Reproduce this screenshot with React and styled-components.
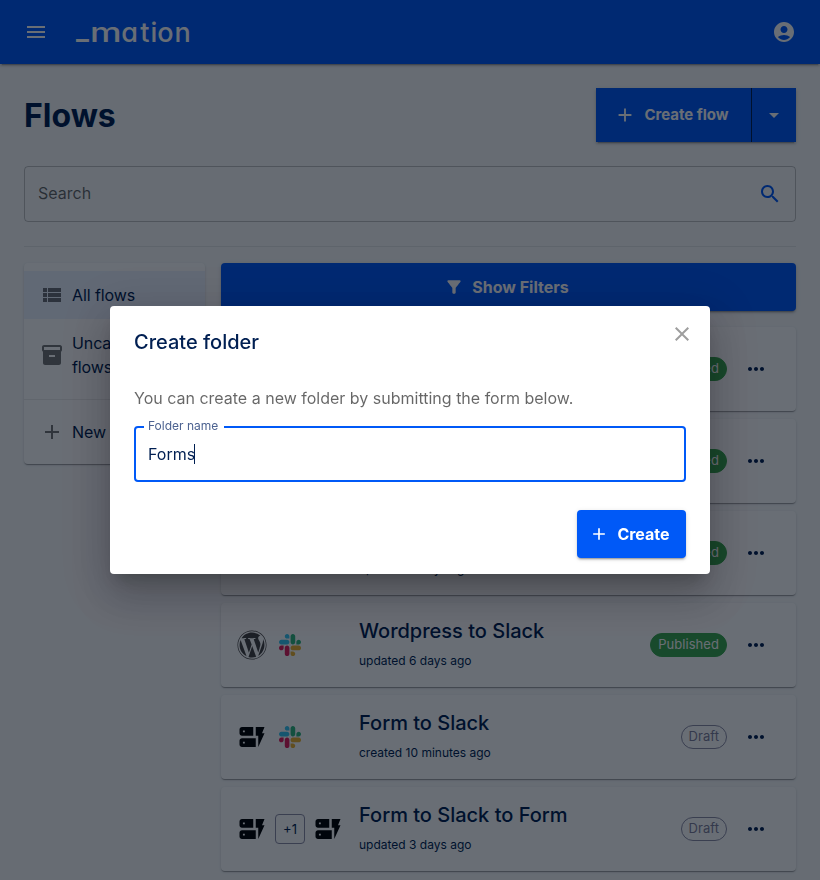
import React from "react";
import styled, { createGlobalStyle, ThemeProvider } from "styled-components";
import { FaWordpress } from "react-icons/fa";

const theme = {
  colors: {
    primary: "#0059f7",
    text: "#001f52",
    muted: "rgba(0, 0, 0, 0.54)",
    bg: "#f9fafb",
    paper: "#ffffff",
    divider: "rgba(0, 0, 0, 0.08)",
    green: "#3aa84e",
    outline: "#8d8da6",
  },
  shadow: {
    low: "0 2px 1px -1px rgba(0,0,0,.2), 0 1px 1px 0 rgba(0,0,0,.14), 0 1px 3px 0 rgba(0,0,0,.12)",
    mid: "0 3px 1px -2px rgba(0,0,0,.2), 0 2px 2px 0 rgba(0,0,0,.14), 0 1px 5px 0 rgba(0,0,0,.12)",
    high: "0 11px 15px -7px rgba(0,0,0,.2), 0 24px 38px 3px rgba(0,0,0,.14), 0 9px 46px 8px rgba(0,0,0,.12)",
  },
};

const paths = {
  menu: "M3 18h18v-2H3v2zm0-5h18v-2H3v2zm0-7v2h18V6H3z",
  account:
    "M12 2C6.48 2 2 6.48 2 12s4.48 10 10 10 10-4.48 10-10S17.52 2 12 2m0 4c1.93 0 3.5 1.57 3.5 3.5S13.93 13 12 13s-3.5-1.57-3.5-3.5S10.07 6 12 6m0 14c-2.03 0-4.43-.82-6.14-2.88C7.55 15.8 9.68 15 12 15s4.45.8 6.14 2.12C16.43 19.18 14.03 20 12 20",
  add: "M19 13h-6v6h-2v-6H5v-2h6V5h2v6h6z",
  arrow: "m7 10 5 5 5-5z",
  search:
    "M15.5 14h-.79l-.28-.27C15.41 12.59 16 11.11 16 9.5 16 5.91 13.09 3 9.5 3S3 5.91 3 9.5 5.91 16 9.5 16c1.61 0 3.09-.59 4.23-1.57l.27.28v.79l5 4.99L20.49 19zm-6 0C7.01 14 5 11.99 5 9.5S7.01 5 9.5 5 14 7.01 14 9.5 11.99 14 9.5 14",
  list: "M3 14h4v-4H3v4zm0 5h4v-4H3v4zM3 9h4V5H3v4zm5 5h13v-4H8v4zm0 5h13v-4H8v4zM8 5v4h13V5H8z",
  box: "M20 2H4c-1 0-2 .9-2 2v3.01c0 .72.43 1.34 1 1.69V20c0 1.1 1.1 2 2 2h14c.9 0 2-.9 2-2V8.7c.57-.35 1-.97 1-1.69V4c0-1-1-2-2-2m-5 12H9v-2h6zm5-7H4V4h16z",
  filter:
    "M4.25 5.61C6.27 8.2 10 13 10 13v6c0 .55.45 1 1 1h2c.55 0 1-.45 1-1v-6s3.72-4.8 5.74-7.39c.51-.66.04-1.61-.79-1.61H5.04c-.83 0-1.3.95-.79 1.61",
  more: "M6 10c-1.1 0-2 .9-2 2s.9 2 2 2 2-.9 2-2-.9-2-2-2m12 0c-1.1 0-2 .9-2 2s.9 2 2 2 2-.9 2-2-.9-2-2-2m-6 0c-1.1 0-2 .9-2 2s.9 2 2 2 2-.9 2-2-.9-2-2-2",
  close:
    "M19 6.41 17.59 5 12 10.59 6.41 5 5 6.41 10.59 12 5 17.59 6.41 19 12 13.41 17.59 19 19 17.59 13.41 12z",
  form: "M17 20v-9h-2V4h7l-2 5h2l-5 11zm-2-7v7H4c-1.1 0-2-.9-2-2v-3c0-1.1.9-2 2-2h11zm-8.75 2.75h-1.5v1.5h1.5v-1.5zM13 4v7H4c-1.1 0-2-.9-2-2V6c0-1.1.9-2 2-2h9zM6.25 6.75h-1.5v1.5h1.5v-1.5z",
};

const Icon = ({ name, size = 24 }) => (
  <svg width={size} height={size} viewBox="0 0 24 24" fill="currentColor">
    <path d={paths[name]} />
  </svg>
);

const SlackIcon = () => (
  <svg width="22" height="22" viewBox="0 0 122.8 122.8">
    <path fill="#e01e5a" d="M25.8 77.6c0 7.1-5.8 12.9-12.9 12.9S0 84.7 0 77.6s5.8-12.9 12.9-12.9h12.9v12.9zM32.3 77.6c0-7.1 5.8-12.9 12.9-12.9s12.9 5.8 12.9 12.9v32.3c0 7.1-5.8 12.9-12.9 12.9s-12.9-5.8-12.9-12.9V77.6z" />
    <path fill="#36c5f0" d="M45.2 25.8c-7.1 0-12.9-5.8-12.9-12.9S38.1 0 45.2 0s12.9 5.8 12.9 12.9v12.9H45.2zM45.2 32.3c7.1 0 12.9 5.8 12.9 12.9s-5.8 12.9-12.9 12.9H12.9C5.8 58.1 0 52.3 0 45.2s5.8-12.9 12.9-12.9h32.3z" />
    <path fill="#2eb67d" d="M97 45.2c0-7.1 5.8-12.9 12.9-12.9s12.9 5.8 12.9 12.9-5.8 12.9-12.9 12.9H97V45.2zM90.5 45.2c0 7.1-5.8 12.9-12.9 12.9s-12.9-5.8-12.9-12.9V12.9C64.7 5.8 70.5 0 77.6 0s12.9 5.8 12.9 12.9v32.3z" />
    <path fill="#ecb22e" d="M77.6 97c7.1 0 12.9 5.8 12.9 12.9s-5.8 12.9-12.9 12.9-12.9-5.8-12.9-12.9V97h12.9zM77.6 90.5c-7.1 0-12.9-5.8-12.9-12.9s5.8-12.9 12.9-12.9h32.3c7.1 0 12.9 5.8 12.9 12.9s-5.8 12.9-12.9 12.9H77.6z" />
  </svg>
);

const flows = [
  { title: "Slack to Form", time: "updated 6 days ago", apps: ["slack", "form"], published: true },
  { title: "Form to Wordpress", time: "updated 6 days ago", apps: ["form", "wordpress"], published: true },
  { title: "Slack to Wordpress", time: "updated 6 days ago", apps: ["slack", "wordpress"], published: true },
  { title: "Wordpress to Slack", time: "updated 6 days ago", apps: ["wordpress", "slack"], published: true },
  { title: "Form to Slack", time: "created 10 minutes ago", apps: ["form", "slack"] },
  { title: "Form to Slack to Form", time: "updated 3 days ago", apps: ["form", "+1", "form"] },
];

const AppIcon = ({ app }) => {
  if (app === "slack") return <AppSlot><SlackIcon /></AppSlot>;
  if (app === "wordpress") return <AppSlot $color="#464342"><FaWordpress size={30} /></AppSlot>;
  if (app === "form") return <AppSlot $color="#000"><Icon name="form" size={30} /></AppSlot>;
  return <AppSlot $outlined>{app}</AppSlot>;
};

const FlowRow = ({ flow }) => (
  <Card>
    <Apps>
      {flow.apps.map((app, i) => (
        <AppIcon key={i} app={app} />
      ))}
    </Apps>
    <FlowInfo>
      <FlowTitle>{flow.title}</FlowTitle>
      <FlowTime>{flow.time}</FlowTime>
    </FlowInfo>
    <Chip $published={flow.published}>{flow.published ? "Published" : "Draft"}</Chip>
    <Icon name="more" />
  </Card>
);

const App = () => {
  return (
    <ThemeProvider theme={theme}>
      <GlobalStyle />
      <Page>
        <Header>
          <Icon name="menu" />
          <Logo viewBox="0 0 120 32">
            <text>
              <tspan x="1" y="23" className="bar">_</tspan>
              <tspan x="15" y="26" textLength="31.6" lengthAdjust="spacingAndGlyphs">m</tspan>
              <tspan x="46.2 65.2 75.6 82.3 99.6" y="26">ation</tspan>
            </text>
          </Logo>
          <Icon name="account" />
        </Header>

        <Main>
          <TitleRow>
            <h1>Flows</h1>
            <ButtonGroup>
              <SplitMain>
                <Icon name="add" size={22} />
                Create flow
              </SplitMain>
              <SplitArrow>
                <Icon name="arrow" />
              </SplitArrow>
            </ButtonGroup>
          </TitleRow>

          <SearchField>
            <span>Search</span>
            <Icon name="search" />
          </SearchField>

          <Divider />

          <Columns>
            <Sidebar>
              <FolderList>
                <FolderItem $selected>
                  <Icon name="list" />
                  <span>All flows</span>
                </FolderItem>
                <FolderItem>
                  <Icon name="box" />
                  <span>Uncategorized flows</span>
                </FolderItem>
              </FolderList>
              <Divider />
              <FolderList>
                <FolderItem>
                  <Icon name="add" />
                  <span>New folder</span>
                </FolderItem>
              </FolderList>
            </Sidebar>

            <FlowColumn>
              <Button $wide>
                <Icon name="filter" size={20} />
                Show Filters
              </Button>
              <FlowList>
                {flows.map((flow, i) => (
                  <FlowRow key={i} flow={flow} />
                ))}
              </FlowList>
            </FlowColumn>
          </Columns>
        </Main>
      </Page>

      <Backdrop>
        <Dialog>
          <DialogHead>
            <h2>Create folder</h2>
            <CloseButton>
              <Icon name="close" />
            </CloseButton>
          </DialogHead>
          <DialogText>You can create a new folder by submitting the form below.</DialogText>
          <Field>
            <legend>Folder name</legend>
            <FieldValue>
              Forms
              <Caret />
            </FieldValue>
          </Field>
          <Actions>
            <CreateButton>
              <Icon name="add" size={20} />
              Create
            </CreateButton>
          </Actions>
        </Dialog>
      </Backdrop>
    </ThemeProvider>
  );
};

const GlobalStyle = createGlobalStyle`
  * {
    box-sizing: border-box;
  }
  body {
    margin: 0;
    overflow: hidden;
    font-family: Inter, "Liberation Sans", sans-serif;
    font-size: 16px;
    line-height: 24px;
    color: ${theme.colors.text};
    -webkit-font-smoothing: antialiased;
  }
  h1, h2, p {
    margin: 0;
  }
  svg {
    display: block;
    flex-shrink: 0;
  }
`;

const Page = styled.div`
  height: 880px;
  overflow: hidden;
  background: ${({ theme }) => theme.colors.bg};
`;

const Header = styled.header`
  display: flex;
  align-items: center;
  height: 64px;
  padding: 0 24px;
  color: #fff;
  background: ${({ theme }) => theme.colors.primary};
  box-shadow: ${({ theme }) => theme.shadow.mid};
  position: relative;
`;

const Logo = styled.svg`
  width: 120px;
  height: 32px;
  margin: 0 auto 0 27px;
  overflow: visible;
  fill: #fff;
  text {
    font-size: 27px;
    font-weight: 500;
    font-feature-settings: "cv11";
  }
  .bar {
    font-weight: 700;
  }
`;

const Main = styled.main`
  padding: 24px;
`;

const TitleRow = styled.div`
  display: flex;
  align-items: center;
  justify-content: space-between;
  margin-bottom: 24px;
  h1 {
    padding-top: 2px;
    font-size: 32px;
    font-weight: 700;
    line-height: 40px;
  }
`;

const Button = styled.button`
  display: flex;
  align-items: center;
  justify-content: center;
  gap: 8px;
  width: ${({ $wide }) => ($wide ? "100%" : "auto")};
  height: 48px;
  padding: 0 16px 0 12px;
  border: 0;
  border-radius: 4px;
  color: #fff;
  font: 700 16px/24px Inter, "Liberation Sans", sans-serif;
  background: ${({ theme }) => theme.colors.primary};
  box-shadow: ${({ theme }) => theme.shadow.mid};
`;

const CreateButton = styled(Button)`
  width: 109px;
`;

const ButtonGroup = styled.div`
  display: flex;
  height: 54px;
  box-shadow: ${({ theme }) => theme.shadow.mid};
`;

const SplitMain = styled(Button)`
  width: 156px;
  height: 54px;
  padding: 0 22px 0 18px;
  border-right: 1px solid ${({ theme }) => theme.colors.text};
  border-radius: 0;
  font-size: 15px;
  white-space: nowrap;
  box-shadow: none;
`;

const SplitArrow = styled(Button)`
  width: 44px;
  height: 54px;
  padding: 0;
  border-radius: 0;
  box-shadow: none;
`;

const SearchField = styled.div`
  display: flex;
  align-items: center;
  justify-content: space-between;
  height: 56px;
  padding: 0 13px;
  border: 1px solid rgba(0, 0, 0, 0.23);
  border-radius: 4px;
  color: rgba(0, 0, 0, 0.6);
  margin-bottom: 24px;
  span {
    padding-bottom: 2px;
  }
  svg {
    color: ${({ theme }) => theme.colors.primary};
  }
`;

const Divider = styled.div`
  height: 1px;
  background: ${({ theme }) => theme.colors.divider};
`;

const Columns = styled.div`
  display: grid;
  grid-template-columns: 181px 575px;
  gap: 16px;
  align-items: start;
  margin-top: 16px;
`;

const Sidebar = styled.aside`
  background: ${({ theme }) => theme.colors.paper};
  border-radius: 4px;
  box-shadow: ${({ theme }) => theme.shadow.low};
`;

const FolderList = styled.div`
  padding: 8px 0;
`;

const FolderItem = styled.div`
  display: flex;
  align-items: center;
  gap: 8px;
  padding: 12px 16px;
  letter-spacing: -0.1px;
  background: ${({ $selected }) => ($selected ? "rgba(0, 89, 247, 0.08)" : "none")};
  svg {
    color: ${({ theme }) => theme.colors.muted};
  }
`;

const FlowColumn = styled.div`
  display: flex;
  flex-direction: column;
  gap: 16px;
`;

const FlowList = styled.div`
  display: flex;
  flex-direction: column;
  gap: 8px;
`;

const Card = styled.article`
  display: flex;
  align-items: center;
  height: 84px;
  padding: 0 28px 0 16px;
  background: ${({ theme }) => theme.colors.paper};
  border-radius: 4px;
  box-shadow: ${({ theme }) => theme.shadow.low};
`;

const Apps = styled.div`
  display: flex;
  gap: 8px;
  width: 122px;
`;

const AppSlot = styled.span`
  display: flex;
  align-items: center;
  justify-content: center;
  width: 30px;
  height: 30px;
  border-radius: 4px;
  border: ${({ $outlined, theme }) => ($outlined ? `1px solid ${theme.colors.outline}` : "0")};
  color: ${({ $color, theme }) => $color || theme.colors.text};
  font-size: 13px;
`;

const FlowInfo = styled.div`
  flex: 1;
  padding-bottom: 4px;
`;

const FlowTitle = styled.div`
  font-size: 20px;
  font-weight: 500;
  line-height: 32px;
`;

const FlowTime = styled.div`
  margin-top: 4px;
  font-size: 12px;
  line-height: 20px;
`;

const Chip = styled.span`
  height: 24px;
  margin-right: 17px;
  padding: 0 7px;
  border: 1px solid ${({ $published, theme }) => ($published ? theme.colors.green : theme.colors.outline)};
  border-radius: 16px;
  background: ${({ $published, theme }) => ($published ? theme.colors.green : "none")};
  color: ${({ $published }) => ($published ? "#fff" : "#7f7f9b")};
  font-size: 13px;
  line-height: 21px;
  letter-spacing: 0.05px;
`;

const Backdrop = styled.div`
  position: fixed;
  inset: 0;
  display: flex;
  align-items: center;
  justify-content: center;
  background: rgba(0, 8, 20, 0.59);
`;

const Dialog = styled.section`
  width: 600px;
  height: 268px;
  padding: 0 24px;
  background: #fff;
  border-radius: 4px;
  box-shadow: ${({ theme }) => theme.shadow.high};
`;

const DialogHead = styled.div`
  display: flex;
  justify-content: space-between;
  height: 80px;
  padding-top: 20px;
  h2 {
    font-size: 20px;
    font-weight: 500;
    line-height: 32px;
  }
`;

const CloseButton = styled.span`
  margin: -4px -8px 0 0;
  color: #9e9e9e;
`;

const DialogText = styled.p`
  color: rgba(0, 0, 0, 0.6);
`;

const Field = styled.fieldset`
  height: 63px;
  margin: 9px 0 0;
  padding: 0 12px;
  border: 2px solid ${({ theme }) => theme.colors.primary};
  border-radius: 4px;
  legend {
    margin-left: -4px;
    padding: 0 6px 2px 4px;
    font-size: 12px;
    line-height: 14px;
    color: #4c6290;
  }
`;

const FieldValue = styled.div`
  display: flex;
  align-items: center;
  height: 37px;
`;

const Caret = styled.span`
  width: 1px;
  height: 20px;
  margin-left: -1px;
  background: ${({ theme }) => theme.colors.text};
`;

const Actions = styled.div`
  display: flex;
  justify-content: flex-end;
  margin-top: 28px;
`;

export default App;
